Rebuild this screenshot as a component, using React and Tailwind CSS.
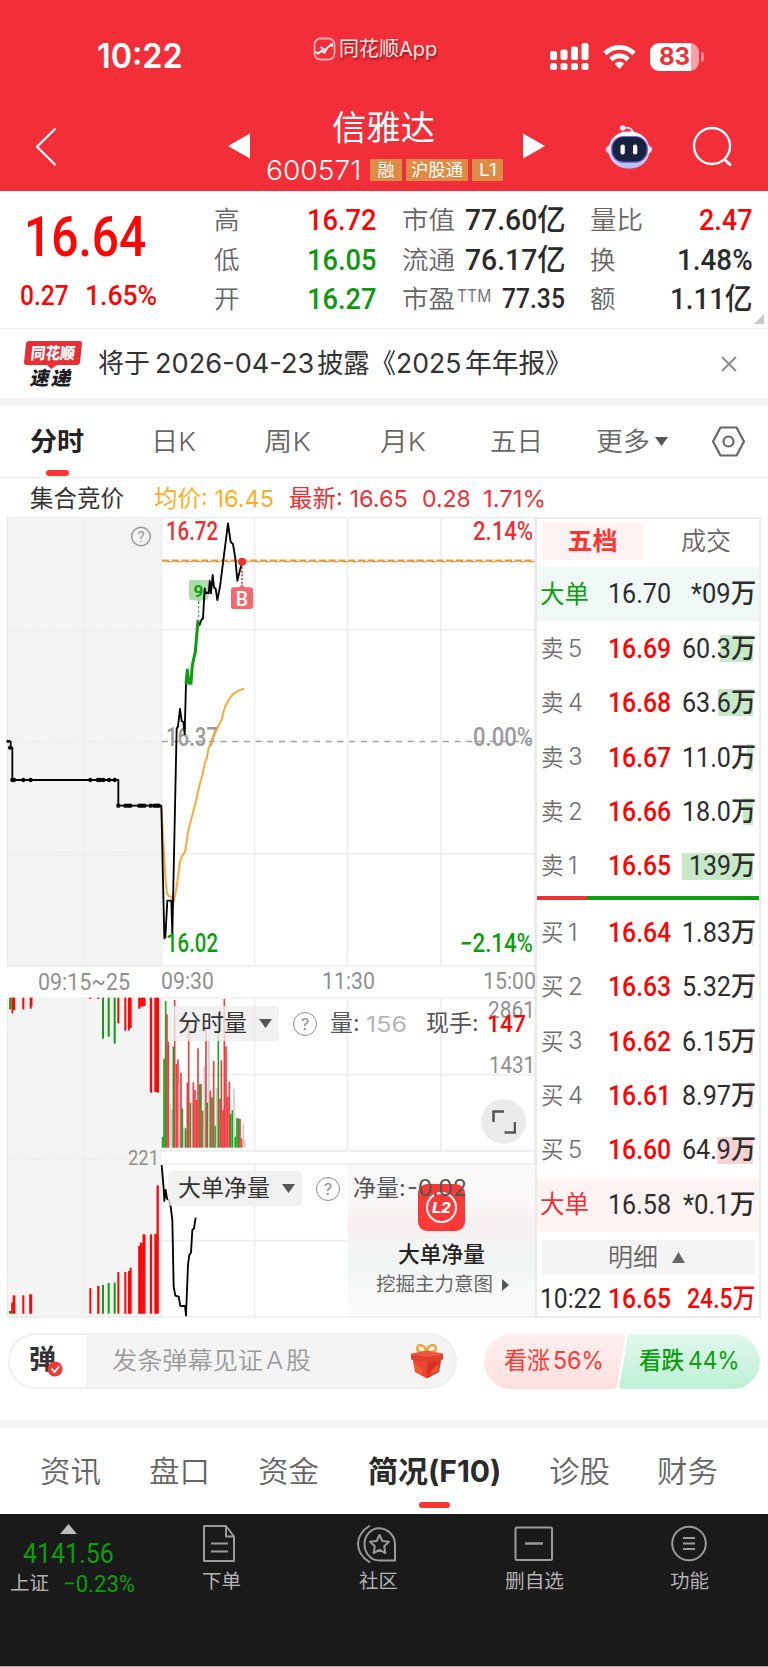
import { useLayoutEffect, useRef, useState } from "react";

const UI = "font-[Inter,'Noto_Sans_CJK_SC',sans-serif]";
const NUM = "font-[Roboto,'Noto_Sans_CJK_SC',sans-serif]";

/* One line of text that is stretched to the width of its own box. */
function Fit({ className = "", children }) {
  const outer = useRef(null);
  const inner = useRef(null);
  const [scale, setScale] = useState(1);
  useLayoutEffect(() => {
    const w = inner.current.offsetWidth;
    if (w) setScale(outer.current.clientWidth / w);
  }, [children]);
  return (
    <span ref={outer} className={`flex shrink-0 items-center leading-none ${className}`}>
      <span
        ref={inner}
        className="inline-block shrink-0 origin-left whitespace-pre"
        style={{ transform: `scaleX(${scale})` }}
      >
        {children}
      </span>
    </span>
  );
}

function StatusBar() {
  return (
    <div className="flex h-[108px] items-start">
      <Fit className="mt-[39px] ml-[97px] h-[36px] w-[86px] text-[33.500px] font-semibold">10:22</Fit>
      <div className="mt-[36px] ml-[130px] flex h-[26px] items-center text-white/90">
        <svg width="23" height="24" viewBox="0 0 23 24" fill="none">
          <rect x="1.5" y="1.5" width="20" height="21" rx="6" stroke="#fff" strokeOpacity=".6" strokeWidth="1.800" />
          <path d="M2 14.500l3 2 3.500-2.500 3 1.500 2.500-4.500 4-3" stroke="#fff" strokeWidth="2" />
          <path d="M7.500 10l4 3M17 7.500h2v2" stroke="#fff" strokeWidth="2" />
        </svg>
        <Fit className="ml-[3px] w-[98px] text-[20px] [text-shadow:1px_2px_2px_rgba(90,0,0,0.6)]">同花顺App</Fit>
      </div>
      <svg className="mt-[43px] ml-[113px] shrink-0" width="40" height="28" viewBox="0 0 40 28" fill="#fff">
        <rect x="0" y="8" width="7" height="9" rx="2" />
        <rect x="10.500" y="6.500" width="7" height="10.500" rx="2" />
        <rect x="21" y="3.500" width="7" height="13.500" rx="2" />
        <rect x="31.500" y="0" width="7" height="17" rx="2" />
        <rect x="0" y="20" width="7" height="7" rx="2.500" />
        <rect x="10.500" y="20" width="7" height="7" rx="2.500" />
        <rect x="21" y="20" width="7" height="7" rx="2.500" />
        <rect x="31.500" y="20" width="7" height="7" rx="2.500" />
      </svg>
      <svg className="mt-[44px] ml-[13px] shrink-0" width="33" height="26" viewBox="0 0 33 26" fill="none" stroke="#fff" strokeWidth="4.800">
        <path d="M2 9.500C10 1.300 23 1.300 31 9.500" />
        <path d="M7.800 15.500c5-4.900 12.400-4.900 17.400 0" />
        <path d="M11.800 19.700c2.600-2.500 6.800-2.500 9.400 0L16.500 25z" fill="#fff" stroke="none" />
      </svg>
      <div className="mt-[43px] ml-[14px] flex h-[28px] w-[49px] shrink-0 items-center rounded-[9px] bg-[linear-gradient(90deg,#fff_0,#fff_84%,#f9a0a4_84%)] pl-[9px] text-[#f12f37]">
        <Fit className="w-[31px] text-[24px] font-bold">83</Fit>
      </div>
      <div className="mt-[52px] ml-[2px] h-[10px] w-[3px] rounded-r-full bg-[#f9868b]" />
    </div>
  );
}

function Robot() {
  return (
    <svg width="48" height="44" viewBox="0 0 48 44">
      <defs>
        <linearGradient id="shell" x1="0" y1="0" x2="0" y2="1">
          <stop stopColor="#ffffff" />
          <stop offset=".55" stopColor="#e6e4fb" />
          <stop offset="1" stopColor="#b4bbf0" />
        </linearGradient>
      </defs>
      <path d="M18 3.500c6-2 10 0 10 6" stroke="#dcd6ea" strokeWidth="2" fill="none" />
      <circle cx="17.500" cy="3" r="2.700" fill="#eceaf8" />
      <ellipse cx="24" cy="24.500" rx="23.300" ry="8" fill="#d9d9f5" />
      <rect x="3.500" y="6.500" width="41" height="37" rx="18.500" fill="url(#shell)" />
      <rect x="6" y="11" width="37" height="27" rx="12.500" fill="#6f6ae0" />
      <rect x="7.500" y="12" width="34" height="24.500" rx="11" fill="#17233f" />
      <rect x="15.500" y="19.500" width="4.300" height="10" rx="2.100" fill="#fff" />
      <rect x="28" y="19.500" width="4.300" height="10" rx="2.100" fill="#fff" />
    </svg>
  );
}

function Header() {
  const tag = "ml-[4px] flex h-[22px] items-center justify-center bg-[#de8b45]";
  return (
    <div className="h-[191px] bg-[#f22f38] text-white">
      <StatusBar />
      <div className="flex h-[83px] items-start">
        <svg className="mt-[19px] ml-[35px] shrink-0" width="23" height="40" viewBox="0 0 23 40" fill="none" stroke="#fff" strokeWidth="2.200">
          <path d="M20.500 1.500 2 19.700 20.500 38" />
        </svg>
        <svg className="mt-[25px] ml-[170px] shrink-0" width="22" height="26" viewBox="0 0 22 26" fill="#fff">
          <path d="M22 0.500v25L0 13z" />
        </svg>
        <div className="ml-[16px] flex w-[238px] shrink-0 flex-col">
          <Fit className="ml-[66px] h-[39px] w-[103px] text-[34px]">信雅达</Fit>
          <div className="mt-[12px] flex h-[22px] items-center">
            <Fit className="w-[95px] text-[27px] font-[350]">600571</Fit>
            <div className={`${tag} ml-[9px]! w-[32px]`}><Fit className="w-[17px] text-[17px]">融</Fit></div>
            <div className={`${tag} w-[62px]`}><Fit className="w-[52px] text-[17px]">沪股通</Fit></div>
            <div className={`${tag} w-[31px]`}><Fit className="w-[18px] text-[17px]">L1</Fit></div>
          </div>
        </div>
        <svg className="mt-[25px] ml-[19px] shrink-0" width="22" height="26" viewBox="0 0 22 26" fill="#fff">
          <path d="M0 0.500v25L22 13z" />
        </svg>
        <div className="mt-[17px] ml-[60px] shrink-0"><Robot /></div>
        <svg className="mt-[18px] ml-[39px] shrink-0" width="42" height="42" viewBox="0 0 42 42" fill="none" stroke="#fff" strokeWidth="2.400">
          <circle cx="20" cy="20" r="18" />
          <path d="m32 33 7 6.500" strokeWidth="3" />
        </svg>
      </div>
    </div>
  );
}

function Stats() {
  const lab = "text-[25.500px] font-[350] text-[#666]";
  const val = `text-[30px] font-medium ${NUM}`;
  return (
    <div className={`relative flex h-[138px] border-b border-[#eee] ${UI}`}>
      <div className={`w-[213px] text-[#fb0505] ${NUM}`}>
        <Fit className="mt-[17px] ml-[24px] h-[58px] w-[122px] text-[55px] font-medium">16.64</Fit>
        <div className="mt-[15px] ml-[20px] flex h-[30px] items-center">
          <Fit className="w-[49px] text-[28px] font-medium">0.27</Fit>
          <Fit className="ml-[16px] w-[72px] text-[28px] font-medium">1.65%</Fit>
        </div>
      </div>
      <div className="mt-[9px] flex flex-col">
        {[
          ["高", "16.72", "text-[#fb0505]"],
          ["低", "16.05", "text-[#0b9a0b]"],
          ["开", "16.27", "text-[#0b9a0b]"],
        ].map(([l, v, c]) => (
          <div key={l} className="flex h-[39.700px] items-center">
            <Fit className={`ml-px w-[26px] ${lab}`}>{l}</Fit>
            <Fit className={`ml-[67px] w-[70px] ${val} ${c}`}>{v}</Fit>
          </div>
        ))}
      </div>
      <div className="mt-[9px] ml-[25px] flex flex-col text-[#2b2b2b]">
        <div className="flex h-[39.700px] items-center">
          <Fit className={`w-[53px] ${lab}`}>市值</Fit>
          <Fit className={`ml-[10px] w-[101px] ${val}`}>77.60亿</Fit>
        </div>
        <div className="flex h-[39.700px] items-center">
          <Fit className={`w-[53px] ${lab}`}>流通</Fit>
          <Fit className={`ml-[10px] w-[101px] ${val}`}>76.17亿</Fit>
        </div>
        <div className="flex h-[39.700px] items-center">
          <Fit className={`w-[53px] ${lab}`}>市盈</Fit>
          <Fit className="mb-[6px] ml-[2px] w-[34px] text-[17px] text-[#777]">TTM</Fit>
          <Fit className={`ml-[11px] w-[63px] text-[27px] font-medium ${NUM}`}>77.35</Fit>
        </div>
      </div>
      <div className="mt-[9px] ml-[24px] flex w-[163px] flex-col text-[#2b2b2b]">
        <div className="flex h-[39.700px] items-center justify-between">
          <Fit className={`w-[53px] ${lab}`}>量比</Fit>
          <Fit className={`w-[54px] text-[#fb0505] ${val}`}>2.47</Fit>
        </div>
        <div className="flex h-[39.700px] items-center justify-between">
          <Fit className={`w-[26px] ${lab}`}>换</Fit>
          <Fit className={`w-[76px] ${val}`}>1.48%</Fit>
        </div>
        <div className="flex h-[39.700px] items-center justify-between">
          <Fit className={`w-[26px] ${lab}`}>额</Fit>
          <Fit className={`w-[83px] ${val}`}>1.11亿</Fit>
        </div>
      </div>
      <svg className="absolute right-[4px] bottom-[4px]" width="10" height="10" viewBox="0 0 10 10"><path d="M10 0v10H0z" fill="#c9c9c9" /></svg>
    </div>
  );
}

function News() {
  return (
    <div className="flex h-[69px] items-center">
      <div className="ml-[24px] flex w-[58px] shrink-0 flex-col items-center">
        <div className="relative flex h-[24px] w-[56px] -skew-x-6 items-center justify-center rounded-[3px] bg-[#e62e34] text-white">
          <Fit className="w-[44px] text-[16px] font-black">同花顺</Fit>
          <svg className="absolute top-[23px] left-[22px]" width="12" height="5" viewBox="0 0 12 5"><path d="M0 0h12L6 5z" fill="#e62e34" /></svg>
        </div>
        <div className="mt-[4px] mr-[4px] flex h-[18px] -skew-x-12 items-center gap-[2px] text-[#1d1d1d]">
          <Fit className="w-[19px] text-[19px] font-black">速</Fit>
          <Fit className="w-[20px] text-[19px] font-black">递</Fit>
        </div>
      </div>
      <div className="ml-[16px] flex w-[475px] shrink-0 items-center text-[27px] text-[#333]">
        <Fit className="w-[52px]">将于</Fit>
        <Fit className="ml-[5px] w-[159px]">2026-04-23</Fit>
        <Fit className="ml-[3px] w-[79px]">披露《</Fit>
        <Fit className="w-[65px]">2025</Fit>
        <Fit className="ml-[4px] w-[107px]">年年报》</Fit>
      </div>
      <svg className="ml-[148px] shrink-0" width="16" height="16" viewBox="0 0 16 16" stroke="#8c8c8c" strokeWidth="2"><path d="M1 1l14 14M15 1 1 15" /></svg>
    </div>
  );
}

function PeriodTabs() {
  const t = "text-[26px] text-[#666] font-[350]";
  return (
    <div className="flex h-[72px] items-center border-b border-[#ececec]">
      <div className="relative ml-[30px]">
        <Fit className="w-[54px] text-[26px] font-bold text-[#222]">分时</Fit>
        <div className="absolute top-[41px] left-[16px] h-[6px] w-[23px] rounded-[3px] bg-[#fb352f]" />
      </div>
      <Fit className={`ml-[67px] w-[45px] ${t}`}>日K</Fit>
      <Fit className={`ml-[68px] w-[47px] ${t}`}>周K</Fit>
      <Fit className={`ml-[69px] w-[46px] ${t}`}>月K</Fit>
      <Fit className={`ml-[64px] w-[53px] ${t}`}>五日</Fit>
      <Fit className={`ml-[53px] w-[54px] ${t}`}>更多</Fit>
      <svg className="ml-[5px] shrink-0" width="13" height="9" viewBox="0 0 13 9"><path d="M0 0h13L6.500 9z" fill="#555" /></svg>
      <svg className="ml-[43px] shrink-0" width="35" height="31" viewBox="0 0 35 31" fill="none" stroke="#666" strokeWidth="2.200">
        <path d="M9.500 1.500h16l7.500 14-7.500 14h-16L2 15.500z" strokeLinejoin="round" />
        <circle cx="17.500" cy="15.500" r="5" />
      </svg>
    </div>
  );
}

function QuoteLine() {
  return (
    <div className="flex h-[39px] items-center pt-[3px] text-[23.500px]">
      <Fit className="ml-[30px] w-[94px] text-[#333]">集合竞价</Fit>
      <Fit className="ml-[30px] w-[120px] text-[#fbb01b]">均价: 16.45</Fit>
      <Fit className="ml-[15px] w-[119px] text-[#ec3035]">最新: 16.65</Fit>
      <Fit className="ml-[14px] w-[49px] text-[#ec3035]">0.28</Fit>
      <Fit className="ml-[12px] w-[63px] text-[#ec3035]">1.71%</Fit>
    </div>
  );
}

const R = "#ff0505";
const G = "#0c9e0c";
const upper = [
  [31, 7, 118, G], [37, 5, 130, R], [42, 7, 120, R], [70, 6, 118, R], [92, 6, 116, R], [95, 5, 108, R],
  [271, 6, 87, R], [295, 6, 87, R], [309, 6, 206, G], [326, 6, 200, G], [344, 6, 221, G], [355, 6, 160, R],
  [376, 6, 182, R], [387, 6, 181, R], [392, 6, 174, R], [418, 7, 116, R], [426, 10, 110, R], [433, 7, 108, R],
  [453, 7, 368, R], [467, 8, 366, R], [474, 6, 368, R],
];
const lower = [
  [31, 8, 1023, G], [36, 5, 998, R], [42, 8, 976, R], [70, 6, 976, R], [92, 9, 973, R], [271, 6, 954, R],
  [295, 7, 948, R], [309, 6, 945, G], [326, 6, 939, G], [344, 6, 938, G], [355, 6, 906, R], [376, 6, 906, R],
  [387, 6, 903, R], [392, 6, 893, R], [418, 7, 828, R], [424, 9, 818, R], [432, 9, 793, R], [453, 7, 793, R],
  [467, 8, 792, R], [473, 7, 646, R],
];
const VR = "#ec3035";
const VX = "#c9c9c9";
const volume = [
  [488, 500, G], [492, 266, G], [497, 93, G], [501, 133, VR], [505, 215, VR], [511, 400, VX], [516, 418, VX],
  [520, 229, G], [524, 90, VR], [529, 282, VR], [534, 268, VR], [538, 340, VX], [543, 308, VR], [547, 415, G],
  [552, 470, VX], [557, 475, G], [562, 338, VR], [566, 148, VR], [571, 398, G], [576, 398, VX], [580, 337, VR],
  [585, 360, VR], [590, 390, VR], [594, 235, VR], [599, 343, VR], [603, 342, G], [608, 422, VR], [613, 290, VX],
  [618, 175, VR], [622, 398, G], [627, 190, VX], [631, 362, VR], [636, 382, G], [641, 273, VR], [646, 467, G],
  [650, 355, VX], [655, 130, G], [660, 387, VR], [664, 271, VR], [669, 420, VR], [673, 87, VR], [678, 229, VR],
  [683, 380, VR], [688, 335, VR], [692, 432, G], [697, 420, G], [702, 356, VX], [706, 500, G], [711, 444, G],
  [716, 446, G], [720, 447, VR], [725, 505, VR], [730, 460, VX], [734, 510, VX],
];
const dotsA = [37, 42, 70, 92, 271, 294, 301, 310, 327, 344];
const dotsB = [355, 376, 384, 391, 418, 425, 433, 452, 463, 470, 476];

function ChartText({ x, y, w, size = 25, fill, weight = 500, children }) {
  return (
    <text x={x} y={y} fontSize={size} fontWeight={weight} fill={fill} textLength={w} lengthAdjust="spacingAndGlyphs">
      {children}
    </text>
  );
}

function Help({ className }) {
  return (
    <span className={`flex h-[24px] w-[24px] shrink-0 items-center justify-center rounded-full border-[1.500px] border-[#8c8c8c] text-[16px] leading-none text-[#8c8c8c] ${className}`}>
      ?
    </span>
  );
}

function Caret() {
  return <svg className="ml-[12px] shrink-0" width="13" height="9" viewBox="0 0 13 9"><path d="M0 0h13L6.500 9z" fill="#555" /></svg>;
}

function Chart() {
  return (
    <div className="relative h-[803px] w-[537px] shrink-0">
      <svg className="block overflow-visible font-[Roboto,sans-serif]" width="537" height="803" viewBox="0 517 537 803" fill="none">
        <rect x="7" y="517" width="155" height="450" fill="#f4f4f4" />
        <rect x="7" y="997" width="155" height="321" fill="#f4f4f4" />
        <g stroke="#e8e8e8" strokeWidth="1.200">
          <path d="M7.500 517v449.500M7 517.500h529M7 966h529M7.500 997.500V1317M7 1317h154" />
          <path d="M7 630.500h154M7 742h154M7 855.500h154M84.500 517v449M84.500 997v320M7 1159h154" strokeDasharray="2 1.500" />
        </g>
        <g stroke="#eeeeee" strokeWidth="1.700">
          <path d="M161.500 517v449M254.500 517v449M347.500 517v449M441 517v449M162 629.500h374M162 853.700h374" />
          <path d="M161.500 998v153M254.500 998v153M347.500 998v153M441 998v153M162 998h374M162 1074.700h374M162 1150.800h374" />
          <path d="M161.500 1164v153M254.500 1164v153M162 1164h374M162 1240.700h186M162 1316.700h374" />
        </g>
        <path d="M535.700 517v801" stroke="#e8e8e8" strokeWidth="2.500" />
        <path d="M162 741.500h373" stroke="#a0a0a0" strokeWidth="1.600" strokeDasharray="6 5.700" />
        <path d="M162 560.700h373" stroke="#fa9128" strokeWidth="2.200" strokeDasharray="7 2.800" />
        <path d="M167 561.800h368" stroke="#e08428" strokeWidth="1" strokeDasharray="5 4.800" />

        <ChartText x="166" y="539.500" w="52" fill="#ec3035">16.72</ChartText>
        <ChartText x="473" y="539.500" w="60" fill="#ec3035">2.14%</ChartText>
        <ChartText x="166" y="745.500" w="52" fill="#9a9a9a">16.37</ChartText>
        <ChartText x="473" y="745.500" w="60" fill="#9a9a9a">0.00%</ChartText>

        <g transform="translate(0 510) scale(.33333)" strokeLinejoin="round">
          <rect x="567" y="210" width="58" height="60" rx="7" fill="#a9dea9" />
          <path d="M588 270l8 12 8-12z" fill="#a9dea9" />
          <path d="M596 275v52" stroke="#0c9e0c" strokeWidth="3" strokeDasharray="7 6" />
          <path d="M726 160v75" stroke="#f0555b" strokeWidth="6" strokeDasharray="6 5" />
          <path
            d="M484 887 497 1115 501 1150 507 1159 515 1161 522 1175 530 1130 540 1055 545 1040 555 1026 565 960 585 885 600 820 607 795 615 757 620 745 625 718 640 680 665 628 675 590 688 566 700 552 715 542 733 536"
            stroke="#fba93a" strokeWidth="6"
          />
          <path
            d="M22 692 32 695 32 713 37 713 37 810 355 810 355 887 484 887 493 1285 496 1282 502 1172 514 1172 517 1275 530 655 534 650 540 597 545 633 550 636 554 672 558 520"
            stroke="#000" strokeWidth="5.500"
          />
          <path
            d="M594 335 599 345 604 330 609 325 614 235 617 250 622 248 626 250 629 212 633 250 638 195 642 232 647 236 652 270 660 230 684 40 692 96 699 102 706 145 712 212 726 157"
            stroke="#000" strokeWidth="5.500"
          />
          <path d="M558 520 562 480 567 520 573 520 577 465 586 425 594 330" stroke="#0c9e0c" strokeWidth="9" />
          {dotsA.map((x) => <circle key={x} cx={x} cy="810" r="6.500" fill="#000" />)}
          {dotsB.map((x) => <circle key={x} cx={x} cy="887" r="6.500" fill="#000" />)}
          <circle cx="30" cy="713" r="6" fill="#000" />
          <circle cx="24" cy="694" r="5" fill="#000" />
          <circle cx="726" cy="155" r="12" fill="#ec3035" />
          <rect x="693" y="232" width="66" height="65" rx="8" fill="#f06a70" />
          <path d="M716 234l10-12 10 12z" fill="#f06a70" />
        </g>
        <text x="198.500" y="597" fontSize="17" fontWeight="700" fill="#0c9e0c" textAnchor="middle">9</text>
        <text x="242" y="605.500" fontSize="19.500" fontWeight="500" fill="#fff" textAnchor="middle">B</text>
        <circle cx="141" cy="536.500" r="9.300" stroke="#999" strokeWidth="1.500" />
        <text x="141" y="542" fontSize="15" fill="#999" textAnchor="middle">?</text>

        <ChartText x="166" y="951.500" w="52" fill="#0c9e0c">16.02</ChartText>
        <ChartText x="460" y="951.500" w="73" fill="#0c9e0c">−2.14%</ChartText>
        <ChartText x="38" y="990" w="92" size={24} weight={400} fill="#8f8f8f">09:15~25</ChartText>
        <ChartText x="161" y="989" w="53" size={24} weight={400} fill="#8f8f8f">09:30</ChartText>
        <ChartText x="322" y="989" w="53" size={24} weight={400} fill="#8f8f8f">11:30</ChartText>
        <ChartText x="483" y="989" w="53" size={24} weight={400} fill="#8f8f8f">15:00</ChartText>

        <g transform="translate(0 970) scale(.33333)">
          {upper.map(([x, w, y, c]) => <rect key={`${x}-${y}`} x={x - w / 2} y="83" width={w} height={y - 83} fill={c} />)}
          {lower.map(([x, w, y, c]) => <rect key={`${x}-${y}`} x={x - w / 2} y={y} width={w} height={1031 - y} fill={c} />)}
          {volume.map(([x, y, c]) => <rect key={x} x={x - 2.5} y={y} width="5" height={533 - y} fill={c} fillOpacity=".93" />)}
          <path
            d="M485 585 491 655 493 693 497 660 501 686 507 690 512 710 517 750 521 950 526 977 536 980 541 1008 555 1008 558 1037 564 885 568 855 573 848 577 780 582 775 587 743"
            stroke="#000" strokeWidth="5.500" strokeLinejoin="round"
          />
        </g>
        <ChartText x="128" y="1165" w="31" size={19.500} weight={400} fill="#8f8f8f">221</ChartText>
        <ChartText x="488" y="1017.500" w="47" size={23} weight={400} fill="#8f8f8f">2861</ChartText>
        <ChartText x="489" y="1073" w="46" size={23} weight={400} fill="#8f8f8f">1431</ChartText>
      </svg>

      <div className="absolute top-[489px] left-[168px] flex h-[35px] items-center text-[23px] text-[#555]">
        <div className="flex h-[35px] w-[111px] items-center rounded-[4px] bg-[#eeeeee]/80 pl-[10px] text-[#333]">
          <Fit className="w-[69px]">分时量</Fit>
          <Caret />
        </div>
        <Help className="ml-[14px]" />
        <Fit className="ml-[13px] w-[30px]">量:</Fit>
        <Fit className="ml-[6px] w-[41px] text-[22px] text-[#b5b5b5]">156</Fit>
        <Fit className="ml-[19px] w-[53px]">现手:</Fit>
        <Fit className={`ml-[8px] w-[39px] text-[24px] font-medium text-[#fb0505] ${NUM}`}>147</Fit>
      </div>

      <div className="absolute top-[582px] left-[481px] flex h-[45px] w-[45px] items-center justify-center rounded-full bg-[#ebebeb]">
        <svg width="24" height="24" viewBox="0 0 24 24" fill="none" stroke="#555" strokeWidth="2.500"><path d="M1.500 12V1.500H12M12.500 22.500H23V12" /></svg>
      </div>

      <div className="absolute top-[648px] left-[348px] flex h-[151px] w-[187px] flex-col items-center bg-[linear-gradient(180deg,#fafafa_0%,#f9f7f7_25%,#f8eff0_40%,#f4f5f5_54%,#f1f5f4_66%,#f9f9f9_84%,#fafafa_100%)]">
        <div className="mt-[19px] flex h-[47px] w-[47px] items-center justify-center rounded-[9px] bg-[#fb3a37]">
          <div className="flex h-[31px] w-[31px] items-center justify-center rounded-full border-[2px] border-white">
            <Fit className="w-[19px] text-[14px] font-extrabold text-white italic">L2</Fit>
          </div>
        </div>
        <Fit className="mt-[11px] h-[26px] w-[87px] text-[21.500px] font-medium text-[#222]">大单净量</Fit>
        <div className="mt-[6px] flex h-[22px] items-center gap-[9px] pl-[2px] text-[#666]">
          <Fit className="w-[117px] text-[19.500px]">挖掘主力意图</Fit>
          <svg width="7" height="12" viewBox="0 0 7 12"><path d="M0 0v12l7-6z" fill="#555" /></svg>
        </div>
      </div>

      <div className="absolute top-[654px] left-[168px] flex h-[35px] items-center text-[23px] text-[#555]">
        <div className="flex h-[35px] w-[134px] items-center rounded-[4px] bg-[#eeeeee]/80 pl-[10px] text-[#333]">
          <Fit className="w-[92px]">大单净量</Fit>
          <Caret />
        </div>
        <Help className="ml-[14px]" />
        <Fit className="ml-[13px] w-[53px]">净量:</Fit>
        <Fit className="ml-[1px] w-[60px] text-[23px]">-0.02</Fit>
      </div>
    </div>
  );
}

const SELL = "bg-[#c7e9c8]";
const BUY = "bg-[#fbd2d5]";

function BookRow({ side, n, price, amount, aw = "w-[74px]", bar, tone }) {
  return (
    <div className="flex h-[54.400px] items-center">
      <Fit className="ml-[4px] w-[23px] text-[23.500px] font-[350] text-[#6e6e6e]">{side}</Fit>
      <span className="ml-[4px] w-[16px] shrink-0 text-[24px] leading-none font-[350] text-[#6e6e6e]">{n}</span>
      <Fit className={`ml-[24px] w-[63px] text-[27.500px] font-medium text-[#fb0505] ${NUM}`}>{price}</Fit>
      <div className="relative ml-auto flex h-[27px] w-[85px] items-center justify-end pr-[3px]">
        <div className={`absolute top-0 right-[6px] h-[27px] ${bar} ${tone}`} />
        <Fit className={`relative text-[27.500px] font-[450] text-[#2d2d2d] ${NUM} ${aw}`}>{amount}</Fit>
      </div>
    </div>
  );
}

function BigOrder({ price, amount, aw, tone, text }) {
  return (
    <div className={`flex h-[54.400px] items-center ${tone}`}>
      <Fit className={`ml-[3px] w-[49px] text-[24.500px] ${text}`}>大单</Fit>
      <Fit className={`ml-[19px] w-[63px] text-[27.500px] font-[450] text-[#2d2d2d] ${NUM}`}>{price}</Fit>
      <Fit className={`mr-[3px] ml-auto text-[27.500px] font-[450] text-[#2d2d2d] ${NUM} ${aw}`}>{amount}</Fit>
    </div>
  );
}

function OrderBook() {
  return (
    <div className="flex h-[801px] w-[224px] flex-col border-y-2 border-r-2 border-[#ececec]">
      <div className="mt-[4px] flex h-[37px] shrink-0 items-center">
        <div className="ml-[5px] flex h-[37px] w-[101px] items-center justify-center rounded-[4px] bg-[#fff2f2]">
          <Fit className="w-[50px] text-[25px] font-bold text-[#fb352f]">五档</Fit>
        </div>
        <Fit className="ml-[38px] w-[50px] text-[25px] font-[350] text-[#666]">成交</Fit>
      </div>
      <div className="h-[7px] shrink-0" />
      <BigOrder price="16.70" amount="*09万" aw="w-[65px]" tone="bg-[#f0f9f6]" text="text-[#0c9e0c]" />
      <BookRow side="卖" n="5" price="16.69" amount="60.3万" bar="w-[33px]" tone={SELL} />
      <BookRow side="卖" n="4" price="16.68" amount="63.6万" bar="w-[35px]" tone={SELL} />
      <BookRow side="卖" n="3" price="16.67" amount="11.0万" bar="w-[6px]" tone={SELL} />
      <BookRow side="卖" n="2" price="16.66" amount="18.0万" bar="w-[10px]" tone={SELL} />
      <BookRow side="卖" n="1" price="16.65" amount="139万" aw="w-[67px]" bar="w-[71px]" tone={SELL} />
      <div className="mt-[3px] mb-[5px] flex h-[4px] shrink-0">
        <div className="w-[50px] bg-[#ec3035]" />
        <div className="flex-1 bg-[#0c9e0c]" />
      </div>
      <BookRow side="买" n="1" price="16.64" amount="1.83万" bar="w-[1px]" tone={BUY} />
      <BookRow side="买" n="2" price="16.63" amount="5.32万" bar="w-[3px]" tone={BUY} />
      <BookRow side="买" n="3" price="16.62" amount="6.15万" bar="w-[3px]" tone={BUY} />
      <BookRow side="买" n="4" price="16.61" amount="8.97万" bar="w-[5px]" tone={BUY} />
      <BookRow side="买" n="5" price="16.60" amount="64.9万" bar="w-[36px]" tone={BUY} />
      <BigOrder price="16.58" amount="*0.1万" aw="w-[73px]" tone="bg-[#fff3f4]" text="text-[#ec3035]" />
      <div className="mt-[8px] ml-[5px] flex h-[35px] w-[213px] shrink-0 items-center bg-[#f4f4f4]">
        <Fit className="ml-[66px] w-[50px] text-[25px] font-[350] text-[#666]">明细</Fit>
        <svg className="ml-[14px]" width="13" height="11" viewBox="0 0 13 11"><path d="M0 11h13L6.500 0z" fill="#666" /></svg>
      </div>
      <div className={`mt-[9px] flex h-[32px] shrink-0 items-center text-[27px] text-[#fb0505] ${NUM}`}>
        <Fit className="ml-[3px] w-[61px] text-[#2d2d2d]">10:22</Fit>
        <Fit className="ml-[7px] w-[63px] font-medium">16.65</Fit>
        <Fit className="mr-[3px] ml-auto w-[69px] font-medium">24.5万</Fit>
      </div>
    </div>
  );
}

function Gift() {
  return (
    <svg className="shrink-0" width="34" height="36" viewBox="0 0 34 36">
      <path d="M16.500 9.500C10 10 6 7.500 7.500 4s7.500-2 9 5c1.500-7 7.500-8.500 9-5s-2.500 6-9 5.500z" fill="none" stroke="#eba83f" strokeWidth="2.600" />
      <path d="M2.500 15 17 18.500V35.500L5 29z" fill="#ee4630" />
      <path d="M31.500 15 17 18.500V35.500L29 29z" fill="#d73426" />
      <path d="M1 10.500 17 7.500l16 3v5.500L17 19.500 1 16z" fill="#f0593f" />
      <path d="M1 11.500 17 14l16-2.500V16.500L17 19.500 1 16.500z" fill="#e23f2e" />
      <path d="M4 20l9 8-1.500 3.500-6-3.500zM29 20l-8 8.500v3.500l7-4z" fill="#f5703a" fillOpacity=".6" />
    </svg>
  );
}

function CommentBar() {
  return (
    <div className="flex h-[56px] shrink-0 items-center">
      <div className="ml-[8px] flex h-[56px] w-[449px] shrink-0 items-center overflow-hidden rounded-full border-2 border-[#efefef] bg-[#f4f4f4]">
        <div className="relative flex h-full w-[76px] shrink-0 items-center bg-white pb-[4px]">
          <Fit className="ml-[19px] w-[27px] text-[27px] font-bold text-[#333]">弹</Fit>
          <svg className="absolute top-[26px] left-[37px]" width="16" height="16" viewBox="0 0 16 16">
            <circle cx="8" cy="8" r="7.500" fill="#f23a35" />
            <path d="m4.500 7.500 3 3.500 4.500-5.500" fill="none" stroke="#fff" strokeWidth="1.800" />
          </svg>
        </div>
        <div className="ml-[26px] flex w-[199px] shrink-0 items-center text-[24px] font-[350] text-[#999]">
          <Fit className="w-[151px]">发条弹幕见证</Fit>
          <Fit className="ml-[3px] w-[17px]">A</Fit>
          <Fit className="ml-[3px] w-[25px]">股</Fit>
        </div>
        <div className="mb-[1px] ml-[99px]"><Gift /></div>
      </div>
      <div className="relative ml-[27px] h-[55px] w-[276px] shrink-0">
        <svg className="block" width="276" height="55" viewBox="0 0 276 55">
          <defs>
            <linearGradient id="up" x1="0" y1="0" x2="0" y2="1"><stop stopColor="#fff0ef" /><stop offset="1" stopColor="#fde0de" /></linearGradient>
            <linearGradient id="down" x1="0" y1="0" x2="0" y2="1"><stop stopColor="#e0f8ec" /><stop offset="1" stopColor="#bdf0d6" /></linearGradient>
          </defs>
          <path d="M27.500 0H137q4.500 0 4 4l-8 47q-.7 4-5 4H27.500a27.500 27.500 0 0 1 0-55z" fill="url(#up)" />
          <path d="M148 0h100.500a27.500 27.500 0 0 1 0 55H139q-4 0-3.500-4l8-47q.7-4 4.500-4z" fill="url(#down)" />
        </svg>
        <div className="absolute inset-0 flex items-center text-[24px]">
          <Fit className="ml-[20px] w-[46px] text-[#fb3a37]">看涨</Fit>
          <Fit className="ml-[3px] w-[51px] text-[#fb3a37]">56%</Fit>
          <Fit className="ml-[35px] w-[45px] font-medium text-[#0c9e0c]">看跌</Fit>
          <Fit className="ml-[4px] w-[52px] text-[#0c9e0c]">44%</Fit>
        </div>
      </div>
    </div>
  );
}

function SectionTabs() {
  const t = "w-[61px] text-[30px] font-[350] text-[#666]";
  return (
    <div className="flex h-[86px] shrink-0 items-center">
      <Fit className={`ml-[40px] ${t}`}>资讯</Fit>
      <Fit className={`ml-[48px] ${t}`}>盘口</Fit>
      <Fit className={`ml-[48px] ${t}`}>资金</Fit>
      <div className="relative ml-[49px]">
        <Fit className="w-[133px] text-[30px] font-bold text-[#2b2b2b]">简况(F10)</Fit>
        <div className="absolute top-[46px] left-[51px] h-[6px] w-[31px] rounded-[3px] bg-[#fb352f]" />
      </div>
      <Fit className={`ml-[48px] ${t}`}>诊股</Fit>
      <Fit className={`ml-[47px] ${t}`}>财务</Fit>
    </div>
  );
}

function NavItem({ className, label, children, lw }) {
  return (
    <div className={`flex shrink-0 flex-col items-center text-[#b4b4b4] ${className}`}>
      <svg width="42" height="40" viewBox="0 0 42 40" fill="none" stroke="#9a9a9a" strokeWidth="2" strokeLinejoin="round">{children}</svg>
      <Fit className={`mt-[7px] h-[22px] text-[19px] ${lw}`}>{label}</Fit>
    </div>
  );
}

function BottomNav() {
  return (
    <div className="flex h-[153px] shrink-0 items-start border-b border-[#aaa] bg-[#1a1a1a]">
      <div className={`mt-[10px] w-[140px] shrink-0 text-[#0c9e0c] ${NUM}`}>
        <svg className="ml-[60px] block" width="17" height="10" viewBox="0 0 17 10"><path d="M8.500 0 17 10H0z" fill="#bdbdbd" /></svg>
        <Fit className="mt-[6px] ml-[23px] h-[28px] w-[91px] text-[28px]">4141.56</Fit>
        <div className="mt-[1px] flex h-[30px] items-center">
          <Fit className="ml-[10px] w-[39px] text-[19.500px] text-[#b4b4b4]">上证</Fit>
          <Fit className="ml-[14px] w-[72px] text-[24px]">−0.23%</Fit>
        </div>
      </div>
      <NavItem className="mt-[9px] ml-[60px] w-[42px]" label="下单" lw="w-[39px]">
        <path d="M4 3h22l8 10.500V38H4z M26 3v10.500h8M11 20.500h17M11 28.500h17" />
      </NavItem>
      <NavItem className="mt-[9px] ml-[114px] w-[44px]" label="社区" lw="w-[39px]">
        <path d="M22 5.200c-8 0-14.500 7.200-14.500 16S14 37.500 22 37.500h16V21.500C38 12 30 5.200 22 5.200z" />
        <path d="M13 2.500C4 8 1 15 1 21s3 13 12 18.500" />
        <path d="m22.500 12 2.800 6 6.700.8-4.800 4.500 1.200 6.700-5.900-3.200-5.900 3.200 1.200-6.700-4.800-4.500 6.700-.8z" />
      </NavItem>
      <NavItem className="mt-[9px] ml-[104px] w-[60px]" label="删自选" lw="w-[59px]">
        <rect x="2.500" y="4.500" width="36.500" height="32.500" rx="1.500" />
        <path d="M12 20.500h18" strokeWidth="2.500" />
      </NavItem>
      <NavItem className="mt-[9px] ml-[104px] w-[42px]" label="功能" lw="w-[39px]">
        <circle cx="21" cy="20.500" r="16.800" />
        <path d="M15 15h12M15 20.500h12M15 26h12" />
      </NavItem>
    </div>
  );
}

export default function App() {
  return (
    <div className={`flex h-[1667px] w-[768px] flex-col overflow-hidden bg-white ${UI}`}>
      <Header />
      <Stats />
      <News />
      <div className="h-[8px] shrink-0 bg-[#f4f4f4]" />
      <PeriodTabs />
      <QuoteLine />
      <div className="flex h-[816px] shrink-0">
        <Chart />
        <OrderBook />
      </div>
      <CommentBar />
      <div className="mt-[31px] h-[8px] shrink-0 bg-[#f4f4f4]" />
      <SectionTabs />
      <BottomNav />
    </div>
  );
}
